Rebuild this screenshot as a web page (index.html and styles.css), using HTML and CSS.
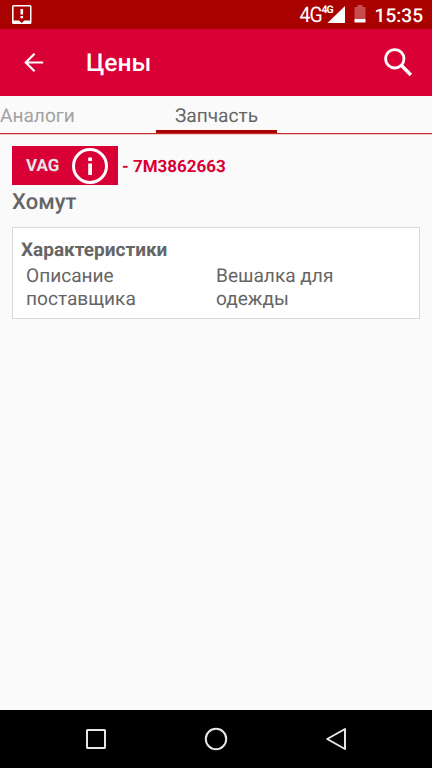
FILE: index.html
```html
<!DOCTYPE html>
<html lang="ru">
<head>
<meta charset="utf-8">
<title>Цены</title>
<link rel="stylesheet" href="styles.css">
</head>
<body>
<div class="status">
  <svg class="notice" width="20" height="20" viewBox="0 0 20 20"><path fill="#fff" fill-rule="evenodd" d="M2 0H18Q19.500 0 19.500 1.500V17.500Q19.500 19 18 19H1.500Q0 19 0 17.500V1.500Q0 0 1.500 0ZM1.600 1.500V15.500H7L9.700 18L12.300 15.500H18V1.500Z"/><path fill="#fff" d="M8.500 4h2.600v5.500H8.500zM8.500 11h2.600v2.300H8.500z"/></svg>
  <div class="net">4G</div>
  <div class="signal"><svg width="18" height="17" viewBox="0 0 18 17"><path fill="#fff" d="M18 0V17H0.500Z"/></svg><span class="net-small">4G</span></div>
  <svg class="battery" width="12" height="18" viewBox="0 0 12 18"><path fill="#c64c50" d="M3.500 0H8.500V2H11.500V14H0.500V2H3.500Z"/><path fill="#fff" d="M0.500 14h11v3.500h-11z"/></svg>
  <div class="time">15:35</div>
</div>
<header class="appbar">
  <svg class="back" width="20" height="20" viewBox="0 0 20 20" fill="none" stroke="#fff" stroke-width="2.200"><path d="M19.200 9.500H2M10.600 .7L1.800 9.500L10.600 18.300"/></svg>
  <h1>Цены</h1>
  <svg class="search" width="29" height="29" viewBox="0 0 29 29" fill="none" stroke="#fff"><circle cx="10.800" cy="10.800" r="9.200" stroke-width="2.800"/><path stroke-width="3.500" d="M17.500 17.500L26.900 26.900"/></svg>
</header>
<nav class="tabs">
  <a class="tab">Аналоги</a>
  <a class="tab active">Запчасть</a>
</nav>
<main>
  <div class="part">
    <div class="brand"><span>VAG</span>
      <svg width="38" height="38" viewBox="0 0 38 38"><circle cx="19" cy="19" r="16.500" fill="none" stroke="#fff" stroke-width="3"/><path fill="#fff" d="M17.200 10.500h3.800v3.500h-3.800zM17.200 16.500h3.800v11.500h-3.800z"/></svg>
    </div>
    <span class="number">- 7M3862663</span>
  </div>
  <h2>Хомут</h2>
  <section class="card">
    <h3>Характеристики</h3>
    <dl><dt>Описание поставщика</dt><dd>Вешалка для одежды</dd></dl>
  </section>
</main>
<footer class="navbar">
  <svg width="24" height="24" viewBox="0 0 24 24"><rect x="3" y="3" width="18" height="18" rx=".5"/></svg>
  <svg width="24" height="24" viewBox="0 0 24 24"><circle cx="12" cy="12" r="10.200"/></svg>
  <svg width="24" height="24" viewBox="0 0 24 24"><path d="M21 2V22L3.200 12Z"/></svg>
</footer>
</body>
</html>
```
FILE: styles.css
```css
* { box-sizing: border-box; margin: 0; padding: 0; }
body {
  width: 432px;
  height: 768px;
  display: flex;
  flex-direction: column;
  overflow: hidden;
  background: #fafafa;
  color: #666;
  font: 19.1px/23px Roboto, sans-serif;
  text-rendering: geometricPrecision;
}
svg { display: block; flex: none; }
.status {
  height: 29px;
  display: flex;
  align-items: flex-start;
  padding: 5px 9px 0 12px;
  background: #a90000;
  color: #fff;
}
.net { margin-left: auto; font-size: 21.5px; line-height: 21px; letter-spacing: -1px; transform: scaleX(.9); transform-origin: right; }
.signal { position: relative; margin: 1px 9px 0 5px; }
.net-small { position: absolute; left: -5px; top: -1px; font-size: 10.5px; font-weight: 700; line-height: 10px; letter-spacing: -1px; }
.battery { margin-right: 9px; }
.time { font-weight: 500; line-height: 21px; }
.appbar {
  height: 67px;
  display: flex;
  align-items: center;
  padding: 0 19px 0 24px;
  background: #d90036;
  color: #fff;
}
.appbar h1 { margin: 2px 0 0 42px; font-size: 24.6px; font-weight: 500; }
.search { margin-left: auto; }
.tabs {
  height: 38px;
  display: flex;
  align-items: flex-start;
  border-bottom: 1px solid #c03030;
  box-shadow: 0 1px #eec8c4;
}
.tab { width: 156px; height: 37px; padding-top: 8px; color: #a2a2a2; }
.tab.active {
  width: 121px;
  text-align: center;
  color: #666;
  border-bottom: 3px solid #a90000;
}
main { flex: 1; padding: 12px 12px 0; }
.part { display: flex; align-items: center; gap: 4px; }
.brand {
  width: 106px;
  height: 39px;
  display: flex;
  align-items: center;
  padding-left: 14px;
  background: #d90036;
  color: #e6e6e6;
  font-size: 17px;
  font-weight: 700;
}
.brand span { width: 34px; padding-top: 2px; }
.brand svg { margin-left: 11px; }
.number { padding-top: 3px; color: #d90036; font-size: 17px; font-weight: 700; }
h2 { margin-top: 4px; font-size: 22px; line-height: 28px; font-weight: 500; }
.card {
  height: 92px;
  margin-top: 10px;
  padding: 10px 7px 0 8px;
  background: #fff;
  border: 1.500px solid #d8d8d8;
}
h3 { font-size: 19px; line-height: 23px; font-weight: 700; }
dl { display: grid; grid-template-columns: 190px 150px; padding: 3px 0 0 5px; }
dt { width: 130px; }
.navbar {
  height: 58px;
  display: flex;
  justify-content: center;
  align-items: center;
  gap: 96px;
  background: #000;
}
.navbar svg { fill: none; stroke: #e6e6e6; stroke-width: 2; stroke-linejoin: round; }
```
